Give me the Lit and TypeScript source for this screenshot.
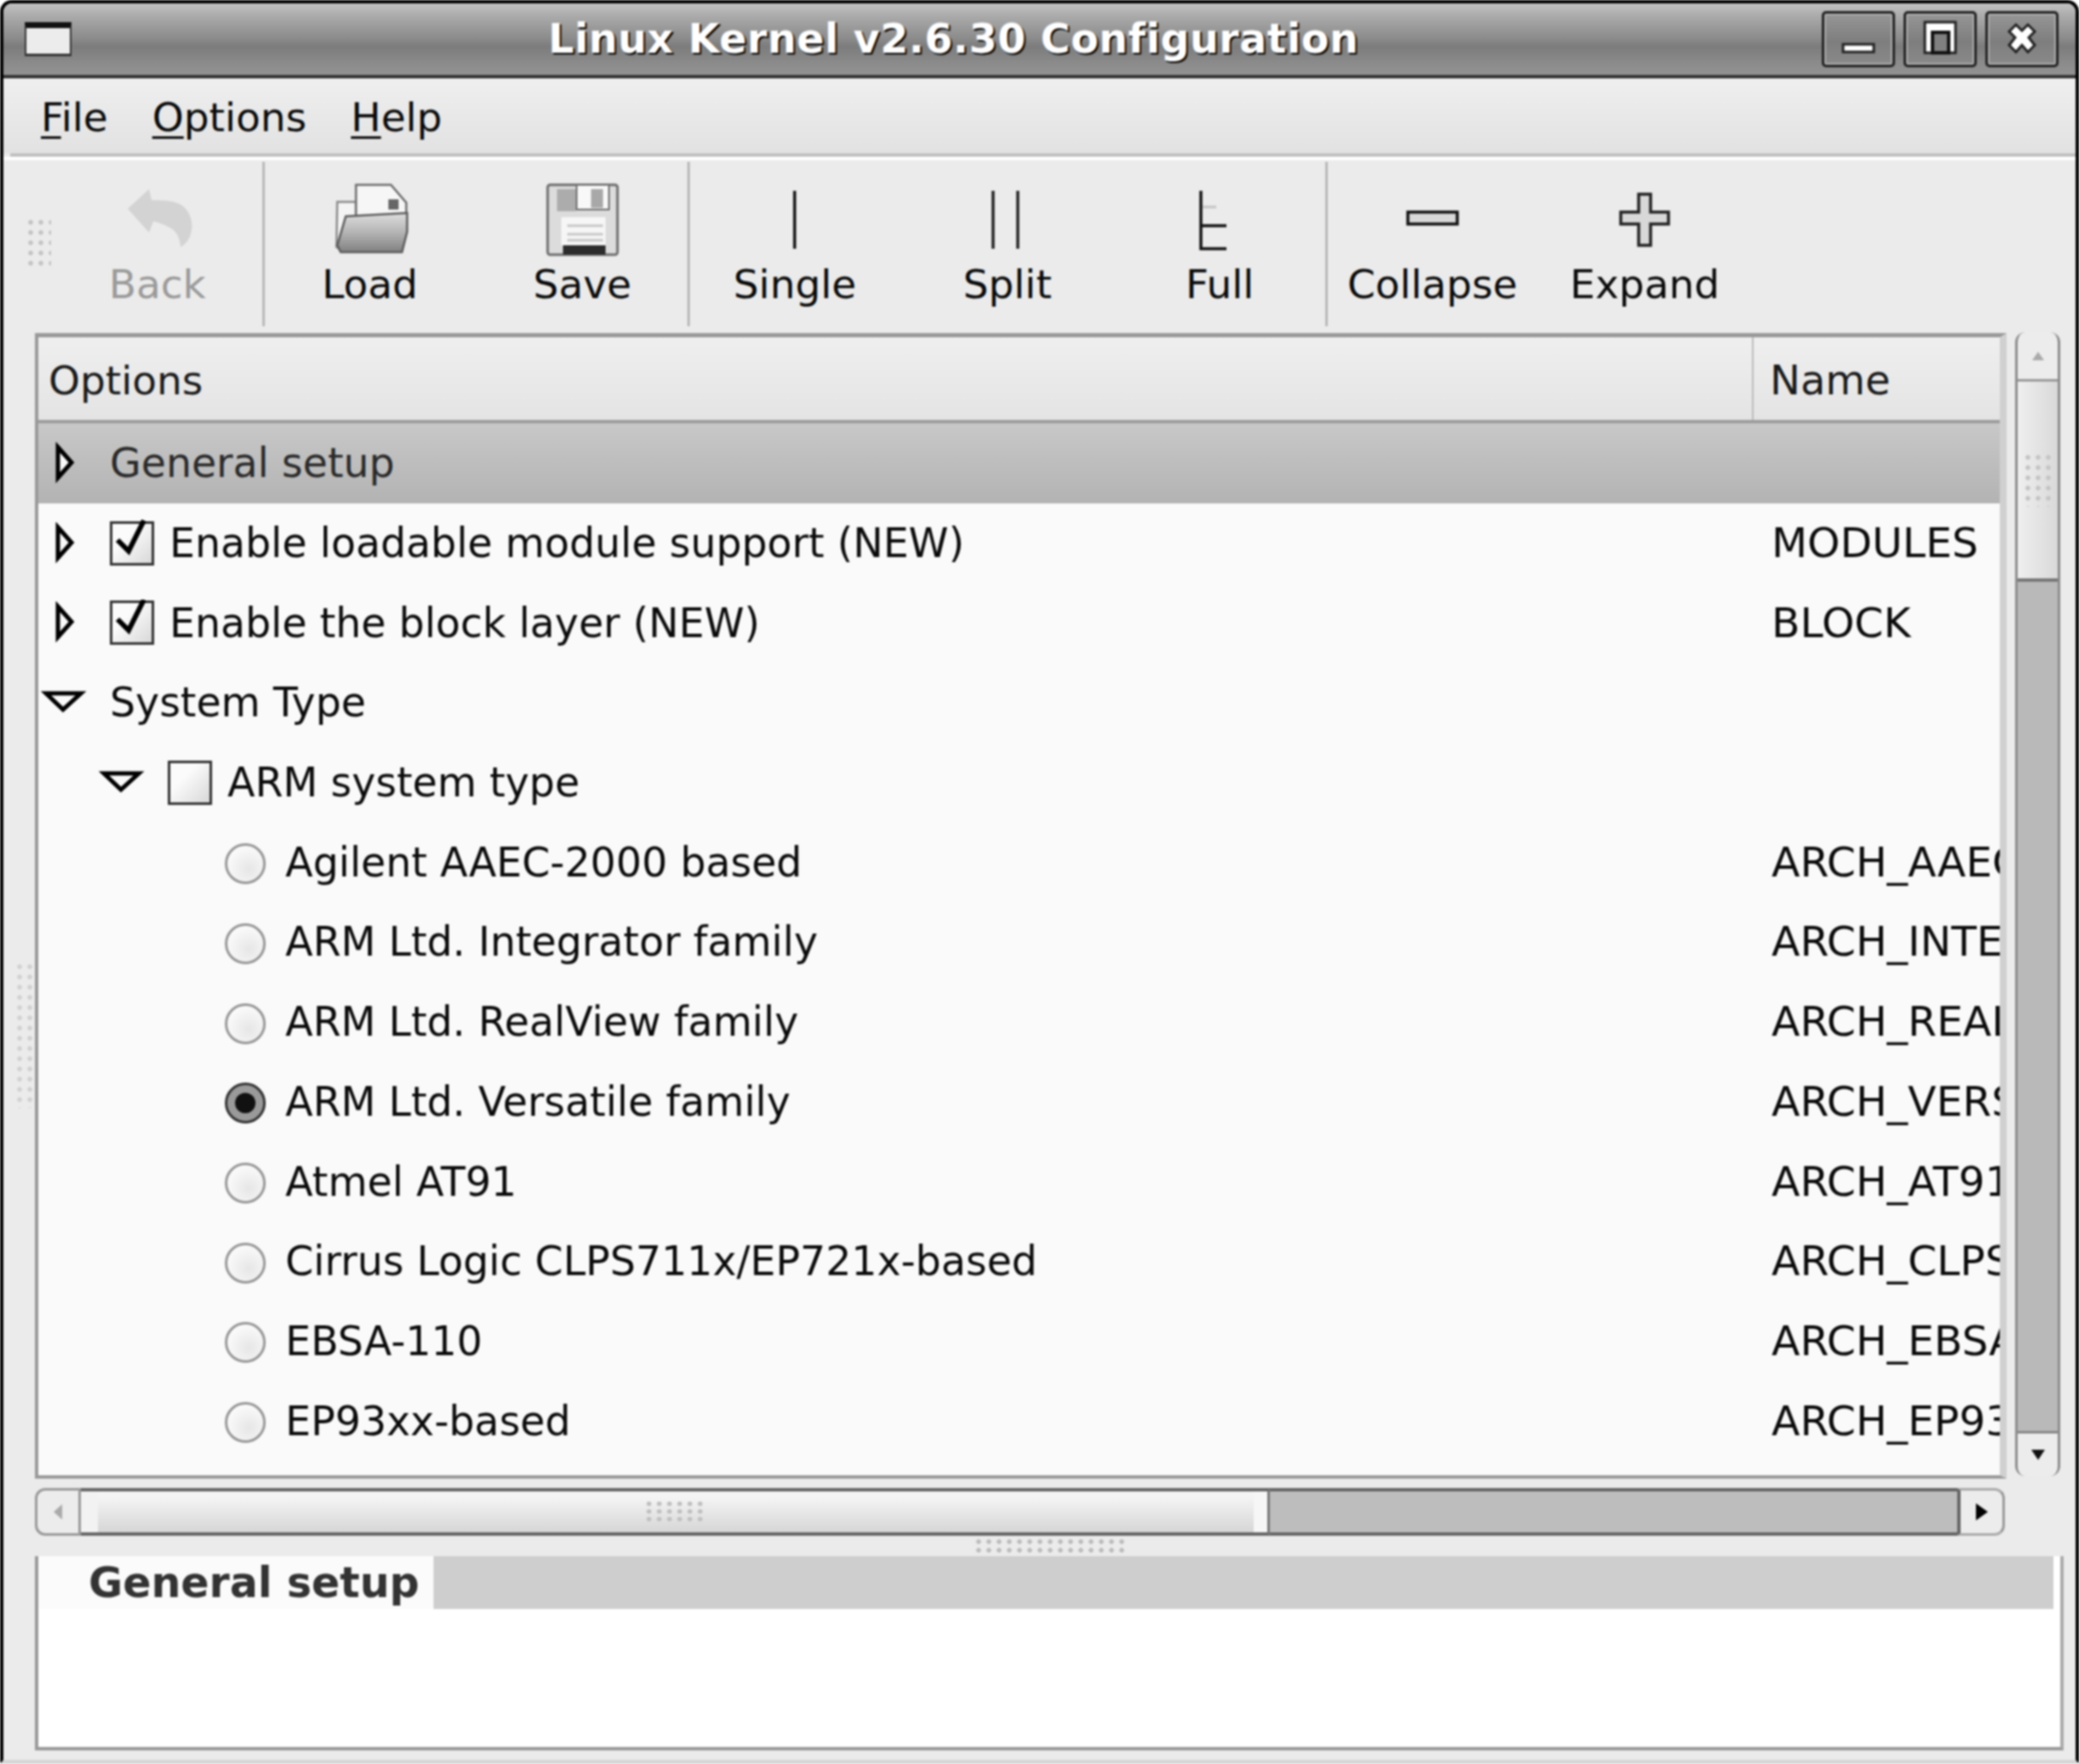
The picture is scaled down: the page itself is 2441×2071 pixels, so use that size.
import { LitElement, html, svg, css } from 'lit';
import { customElement } from 'lit/decorators.js';
import { classMap } from 'lit/directives/class-map.js';

type Control = 'none' | 'check' | 'box' | 'radio' | 'radio-on';
type Expander = 'none' | 'right' | 'down';

interface TreeRow {
  label: string;
  name?: string;
  level: number;
  expander: Expander;
  control: Control;
  selected?: boolean;
}

const ROWS: TreeRow[] = [
  { label: 'General setup', level: 0, expander: 'right', control: 'none', selected: true },
  { label: 'Enable loadable module support (NEW)', name: 'MODULES', level: 0, expander: 'right', control: 'check' },
  { label: 'Enable the block layer (NEW)', name: 'BLOCK', level: 0, expander: 'right', control: 'check' },
  { label: 'System Type', level: 0, expander: 'down', control: 'none' },
  { label: 'ARM system type', level: 1, expander: 'down', control: 'box' },
  { label: 'Agilent AAEC-2000 based', name: 'ARCH_AAEC2000', level: 2, expander: 'none', control: 'radio' },
  { label: 'ARM Ltd. Integrator family', name: 'ARCH_INTEGRATOR', level: 2, expander: 'none', control: 'radio' },
  { label: 'ARM Ltd. RealView family', name: 'ARCH_REALVIEW', level: 2, expander: 'none', control: 'radio' },
  { label: 'ARM Ltd. Versatile family', name: 'ARCH_VERSATILE', level: 2, expander: 'none', control: 'radio-on' },
  { label: 'Atmel AT91', name: 'ARCH_AT91', level: 2, expander: 'none', control: 'radio' },
  { label: 'Cirrus Logic CLPS711x/EP721x-based', name: 'ARCH_CLPS711X', level: 2, expander: 'none', control: 'radio' },
  { label: 'EBSA-110', name: 'ARCH_EBSA110', level: 2, expander: 'none', control: 'radio' },
  { label: 'EP93xx-based', name: 'ARCH_EP93XX', level: 2, expander: 'none', control: 'radio' },
];

// toolbar icons share a 96x92 box
const ICONS = {
  back: svg`<path d="M13 35 L38 12 L41 25 Q70 24 79 33 Q90 44 88 60 Q86 74 75 80 Q74 62 60 56 Q50 51 43 50 L38 63 Z" fill="#d3d3d3"/>`,
  load: svg`
    <defs><linearGradient id="fold" x1="0" y1="0" x2="0" y2="1">
      <stop offset="0" stop-color="#dedede"/><stop offset="0.5" stop-color="#b4b4b4"/><stop offset="1" stop-color="#808080"/>
    </linearGradient></defs>
    <path d="M10 27 H32 V45 L16 84 L9 80 Z" fill="#f4f4f4" stroke="#8a8a8a" stroke-width="2.5"/>
    <path d="M32 27 V7 H73 L91 28 V44 H32 Z" fill="#f6f6f6" stroke="#6c6c6c" stroke-width="2.5"/>
    <rect x="70" y="24" width="12" height="12" fill="#666"/>
    <path d="M20 44 L92 40 L92 62 L86 86 H14 L10 78 Z" fill="url(#fold)" stroke="#5c5c5c" stroke-width="2.5"/>`,
  save: svg`
    <rect x="7" y="7" width="82" height="82" rx="3" fill="#dcdcdc" stroke="#6e6e6e" stroke-width="3"/>
    <rect x="18" y="12" width="22" height="26" fill="#acacac"/>
    <rect x="41" y="7" width="38" height="29" fill="#f8f8f8" stroke="#6e6e6e" stroke-width="2"/>
    <rect x="58" y="12" width="14" height="22" fill="#a8a8a8"/>
    <rect x="23" y="45" width="52" height="33" fill="#f6f6f6"/>
    <path d="M30 55 H72 M30 65 H72 M30 72 H72" stroke="#c8c8c8" stroke-width="3"/>
    <rect x="25" y="78" width="50" height="11" fill="#2c2c2c"/>`,
  single: svg`<path d="M48 14 V82" stroke="#111" stroke-width="3.5"/>`,
  split: svg`<path d="M31 14 V82 M60 14 V82" stroke="#222" stroke-width="3.5"/>`,
  full: svg`
    <path d="M26 14 V82 H56 M26 55 H56" fill="none" stroke="#111" stroke-width="3.5"/>
    <path d="M28 33 H44" stroke="#c4c4c4" stroke-width="3"/>`,
  collapse: svg`<rect x="19" y="39" width="58" height="14" fill="#d8d8d8" stroke="#111" stroke-width="3.5"/>`,
  expand: svg`<path d="M41 18 H55 V39 H76 V53 H55 V78 H41 V53 H20 V39 H41 Z" fill="#d8d8d8" stroke="#222" stroke-width="3.5"/>`,
};

const TOOLS: { label: string; icon: keyof typeof ICONS; off?: boolean; sep?: boolean }[] = [
  { label: 'Back', icon: 'back', off: true, sep: true },
  { label: 'Load', icon: 'load' },
  { label: 'Save', icon: 'save', sep: true },
  { label: 'Single', icon: 'single' },
  { label: 'Split', icon: 'split' },
  { label: 'Full', icon: 'full', sep: true },
  { label: 'Collapse', icon: 'collapse' },
  { label: 'Expand', icon: 'expand' },
];

@customElement('app-root')
export class AppRoot extends LitElement {
  static override styles = css`
    :host {
      display: block;
      font-family: 'DejaVu Sans', 'Liberation Sans', sans-serif;
      font-size: 47px;
      color: #0a0a0a;
      filter: blur(0.8px);
    }

    .window {
      box-sizing: border-box;
      width: 2441px;
      height: 2071px;
      display: flex;
      flex-direction: column;
      background: #ebebeb;
      border: 4px solid #000;
      border-bottom: 5px solid #d6d6d6;
      border-radius: 14px 14px 4px 4px;
      overflow: hidden;
    }

    .titlebar {
      flex: none;
      height: 88px;
      box-sizing: border-box;
      display: flex;
      align-items: center;
      padding: 0 20px 0 25px;
      border-bottom: 4px solid #333;
      background: linear-gradient(#c2c2c2 0, #a8a8a8 20%, #8a8a8a 50%, #7c7c7c 60%, #8c8c8c 85%, #929292 100%);
    }
    .win-icon {
      flex: none;
      box-sizing: border-box;
      width: 55px;
      height: 40px;
      background: #ececec;
      border-top: 7px solid #111;
      border-left: 2px solid #333;
      border-right: 2px solid #333;
      border-bottom: 3px solid #333;
    }
    .title {
      flex: 1;
      text-align: center;
      font-weight: bold;
      font-size: 47.5px;
      line-height: 60px;
      color: #fff;
      letter-spacing: 0.5px;
      padding-left: 16px;
      text-shadow: 2px 2px 1px #000, 1px 1px 0 #000;
    }
    .win-btns {
      flex: none;
      display: flex;
      gap: 10px;
    }
    .win-btn {
      box-sizing: border-box;
      width: 86px;
      height: 66px;
      display: flex;
      align-items: center;
      justify-content: center;
      border: 3px solid #222;
      border-radius: 5px;
      box-shadow: inset 0 0 0 2px #adadad;
      background: linear-gradient(#969696, #7e7e7e 55%, #8a8a8a);
    }
    .win-btn svg { width: 60px; height: 60px; }

    .menubar {
      flex: none;
      height: 88px;
      box-sizing: border-box;
      display: flex;
      align-items: center;
      gap: 52px;
      padding: 3px 0 0 44px;
      background: linear-gradient(#efefef, #e2e2e2);
    }
    .menubar u {
      text-decoration-thickness: 3px;
      text-underline-offset: 6px;
    }
    .rule {
      flex: none;
      height: 4px;
      background: #c0c0c0;
      margin-left: 8px;
    }
    .rule-white {
      flex: none;
      height: 4px;
      background: #fff;
    }

    .toolbar {
      flex: none;
      height: 200px;
      box-sizing: border-box;
      display: flex;
      align-items: stretch;
      padding: 2px 0 5px;
      background: #ebebeb;
    }
    .tool-grip {
      flex: none;
      width: 30px;
      height: 60px;
      margin: 65px 0 0 26px;
      background-image: radial-gradient(circle, #c4c4c4 2.5px, transparent 3px);
      background-size: 12px 12px;
    }
    .tool {
      flex: none;
      width: 249.5px;
      display: flex;
      flex-direction: column;
      align-items: center;
      padding-top: 20px;
    }
    .tool svg {
      width: 96px;
      height: 92px;
      display: block;
    }
    .tool span {
      line-height: 56px;
      margin-top: 4px;
    }
    .tool.off span { color: #9a9a9a; }
    .tool-sep {
      flex: none;
      width: 3px;
      margin: 0 -1.5px;
      background: #b8b8b8;
    }

    .body {
      flex: 1;
      display: flex;
      min-height: 0;
    }
    .gutter {
      flex: none;
      width: 37px;
    }
    .pane-grip {
      width: 24px;
      height: 172px;
      margin: 741px 0 0 13px;
      background-image: radial-gradient(circle, #d0d0d0 2.5px, transparent 3px);
      background-size: 12px 12px;
    }
    .panes {
      flex: none;
      width: 2382px;
      display: flex;
      flex-direction: column;
    }

    .upper {
      flex: none;
      display: flex;
      gap: 10px;
      margin-top: 3px;
      height: 1345px;
    }
    .tree {
      flex: none;
      width: 2315px;
      box-sizing: border-box;
      display: flex;
      flex-direction: column;
      overflow: hidden;
      background: #fafafa;
      border: 4px solid #999;
      border-top-width: 5px;
      border-right-width: 8px;
      border-right-color: #d0d0d0;
    }
    .tree-head {
      flex: none;
      height: 101px;
      box-sizing: border-box;
      display: flex;
      align-items: center;
      background: linear-gradient(#efefef, #e4e4e4);
      border-bottom: 4px solid #9c9c9c;
    }
    .tree-head .col-opt {
      box-sizing: border-box;
      width: 2014px;
      height: 100%;
      display: flex;
      align-items: center;
      padding: 3px 0 0 12px;
      border-right: 2px solid #bbb;
      color: #1a1a1a;
    }
    .tree-head .col-name {
      padding: 3px 0 0 19px;
      font-size: 48px;
      color: #1a1a1a;
    }

    .row {
      flex: none;
      height: 93.7px;
      display: flex;
      align-items: center;
      white-space: nowrap;
    }
    .row.selected {
      background: linear-gradient(#c8c8c8, #b3b3b3);
    }
    .row.selected .label { color: #2a2a2a; }
    .opt {
      flex: none;
      width: 2014px;
      box-sizing: border-box;
      display: flex;
      align-items: center;
      overflow: hidden;
      font-size: 47.4px;
    }
    .lvl1 { padding-left: 68px; }
    .lvl2 { padding-left: 137px; }
    .name {
      flex: none;
      padding-left: 21px;
      font-size: 48.8px;
    }
    .exp {
      flex: none;
      width: 84px;
      height: 50px;
      display: flex;
      align-items: center;
    }
    .exp svg {
      width: 60px;
      height: 50px;
      display: block;
    }
    .box {
      flex: none;
      box-sizing: border-box;
      position: relative;
      width: 52px;
      height: 52px;
      margin-right: 18px;
      border: 3px solid #333;
      background: linear-gradient(135deg, #fbfbfb 35%, #d8d8d8);
    }
    .box svg {
      position: absolute;
      left: -3px;
      top: -3px;
      width: 52px;
      height: 52px;
      overflow: visible;
    }
    .radio {
      flex: none;
      box-sizing: border-box;
      width: 48px;
      height: 48px;
      margin: 4px 23px 0 -2px;
      display: flex;
      align-items: center;
      justify-content: center;
      border: 3px solid #979797;
      border-radius: 50%;
      background: radial-gradient(circle at 60% 65%, #e6e6e6, #fbfbfb 75%);
    }
    .radio.on {
      border-color: #333;
      background: #9a9a9a;
    }
    .radio.on::after {
      content: '';
      width: 24px;
      height: 24px;
      border-radius: 50%;
      background: #111;
    }

    .vscroll {
      flex: none;
      width: 53px;
      box-sizing: border-box;
      height: 1343px;
      margin-top: -1px;
      display: flex;
      flex-direction: column;
      background: #b9b9b9;
      border-left: 3px solid #8c8c8c;
      border-right: 3px solid #8c8c8c;
      border-radius: 12px;
      overflow: hidden;
    }
    .v-btn {
      flex: none;
      height: 55px;
      display: flex;
      align-items: center;
      justify-content: center;
      background: #ececec;
    }
    .v-btn.down { height: 53px; border-top: 3px solid #888; box-sizing: border-box; }
    .v-thumb {
      flex: none;
      height: 238px;
      box-sizing: border-box;
      display: flex;
      justify-content: center;
      padding-top: 83px;
      border-top: 3px solid #999;
      border-bottom: 4px solid #777;
      background: linear-gradient(90deg, #efefef, #d9d9d9);
    }
    .v-track { flex: 1; }
    .thumb-grip-v {
      width: 36px;
      height: 64px;
      background-image: radial-gradient(circle, #c4c4c4 2.5px, transparent 3px);
      background-size: 12px 12px;
    }

    .hscroll {
      flex: none;
      width: 2313px;
      height: 56px;
      margin-top: 11px;
      display: flex;
    }
    .h-btn {
      flex: none;
      width: 54px;
      box-sizing: border-box;
      display: flex;
      align-items: center;
      justify-content: center;
      background: #ececec;
      border: 3px solid #999;
    }
    .h-btn.left { border-radius: 12px 0 0 12px; }
    .h-btn.right {
      width: 56px;
      border-radius: 0 12px 12px 0;
      border-left: 4px solid #666;
      border-top-color: #aaa;
      border-bottom-color: #aaa;
    }
    .h-thumb {
      flex: none;
      width: 1396px;
      box-sizing: border-box;
      display: flex;
      align-items: center;
      justify-content: center;
      border-top: 4px solid #666;
      border-bottom: 4px solid #666;
      border-right: 3px solid #777;
      box-shadow: inset -16px 0 0 #f6f6f6, inset 20px 0 0 #f2f2f2;
      background: linear-gradient(#f4f4f4 15%, #d6d6d6);
    }
    .thumb-grip-h {
      width: 72px;
      height: 28px;
      background-image: radial-gradient(circle, #c0c0c0 2.5px, transparent 3px);
      background-size: 12px 9px;
    }
    .h-track {
      flex: 1;
      box-sizing: border-box;
      background: #bdbdbd;
      border-top: 4px solid #666;
      border-bottom: 4px solid #666;
    }

    .handle {
      flex: none;
      height: 24px;
      display: flex;
      align-items: center;
      padding-left: 1102px;
    }
    .handle div {
      width: 177px;
      height: 20px;
      background-image: radial-gradient(circle, #bcbcbc 2.5px, transparent 3px);
      background-size: 12px 10px;
    }

    .info {
      flex: none;
      height: 228px;
      box-sizing: border-box;
      background: #fff;
      border: 4px solid #999;
      border-top: none;
      border-right-color: #aaa;
    }
    .info-band {
      height: 62px;
      margin-right: 8px;
      background: #cecece;
      display: flex;
    }
    .info-title {
      box-sizing: border-box;
      width: 464px;
      padding-left: 59px;
      background: #fbfbfb;
      font-weight: bold;
      font-size: 49px;
      line-height: 64px;
      color: #333;
    }
  `;

  private renderExpander(kind: Expander) {
    if (kind === 'right') {
      return html`<div class="exp"><svg viewBox="0 0 60 50"><path d="M23 6 L39 24 L23 42 Z" fill="#fafafa" stroke="#000" stroke-width="5"/></svg></div>`;
    }
    if (kind === 'down') {
      return html`<div class="exp"><svg viewBox="0 0 60 50"><path d="M9 14 H50 L29 33 Z" fill="#fafafa" stroke="#000" stroke-width="5"/></svg></div>`;
    }
    return html`<div class="exp"></div>`;
  }

  private renderControl(kind: Control) {
    switch (kind) {
      case 'check':
        return html`<div class="box"><svg viewBox="0 0 52 52"><path d="M9 22 L22 35 L40 -1" fill="none" stroke="#000" stroke-width="6"/></svg></div>`;
      case 'box':
        return html`<div class="box"></div>`;
      case 'radio':
        return html`<div class="radio"></div>`;
      case 'radio-on':
        return html`<div class="radio on"></div>`;
      default:
        return '';
    }
  }

  private renderRow(row: TreeRow) {
    return html`
      <div class="row ${classMap({ selected: !!row.selected })}">
        <div class="opt lvl${row.level}">
          ${this.renderExpander(row.expander)} ${this.renderControl(row.control)}
          <span class="label">${row.label}</span>
        </div>
        <div class="name">${row.name ?? ''}</div>
      </div>
    `;
  }

  override render() {
    return html`
      <div class="window">
        <div class="titlebar">
          <div class="win-icon"></div>
          <div class="title">Linux Kernel v2.6.30 Configuration</div>
          <div class="win-btns">
            <div class="win-btn">
              <svg viewBox="0 0 60 60"><rect x="12" y="36" width="36" height="9" fill="#fff" stroke="#222" stroke-width="3"/></svg>
            </div>
            <div class="win-btn">
              <svg viewBox="0 0 60 60">
                <path d="M12 46 V10 H48 V46 Z" fill="#fff" stroke="#222" stroke-width="3"/>
                <path d="M21 46 V22 H40 V46 Z" fill="#808080" stroke="#111" stroke-width="4"/>
              </svg>
            </div>
            <div class="win-btn">
              <svg viewBox="0 0 60 60"><path d="M15 21 L23 13 L30 20 L37 13 L45 21 L38 28 L45 37 L37 45 L30 37 L23 45 L15 37 L22 28 Z" fill="#fff" stroke="#222" stroke-width="3"/></svg>
            </div>
          </div>
        </div>

        <div class="menubar">
          <span><u>F</u>ile</span>
          <span><u>O</u>ptions</span>
          <span><u>H</u>elp</span>
        </div>
        <div class="rule"></div>
        <div class="rule-white"></div>

        <div class="toolbar">
          <div class="tool-grip"></div>
          ${TOOLS.map(
            (t) => html`
              <div class="tool ${classMap({ off: !!t.off })}">
                <svg viewBox="0 0 96 92">${ICONS[t.icon]}</svg>
                <span>${t.label}</span>
              </div>
              ${t.sep ? html`<div class="tool-sep"></div>` : ''}
            `,
          )}
        </div>

        <div class="body">
          <div class="gutter"><div class="pane-grip"></div></div>
          <div class="panes">
            <div class="upper">
              <div class="tree">
                <div class="tree-head">
                  <div class="col-opt">Options</div>
                  <div class="col-name">Name</div>
                </div>
                ${ROWS.map((r) => this.renderRow(r))}
              </div>
              <div class="vscroll">
                <div class="v-btn"><svg width="16" height="12" viewBox="0 0 16 12"><path d="M8 1 L15 11 H1 Z" fill="#aaa"/></svg></div>
                <div class="v-thumb"><div class="thumb-grip-v"></div></div>
                <div class="v-track"></div>
                <div class="v-btn down"><svg width="18" height="14" viewBox="0 0 18 14"><path d="M1 1 H17 L9 13 Z" fill="#111"/></svg></div>
              </div>
            </div>

            <div class="hscroll">
              <div class="h-btn left"><svg width="12" height="20" viewBox="0 0 12 20"><path d="M11 1 V19 L1 10 Z" fill="#aaa"/></svg></div>
              <div class="h-thumb"><div class="thumb-grip-h"></div></div>
              <div class="h-track"></div>
              <div class="h-btn right"><svg width="16" height="22" viewBox="0 0 16 22"><path d="M1 1 L15 11 L1 21 Z" fill="#000"/></svg></div>
            </div>

            <div class="handle"><div></div></div>

            <div class="info">
              <div class="info-band"><div class="info-title">General setup</div></div>
            </div>
          </div>
        </div>
      </div>
    `;
  }
}

declare global {
  interface HTMLElementTagNameMap {
    'app-root': AppRoot;
  }
}
